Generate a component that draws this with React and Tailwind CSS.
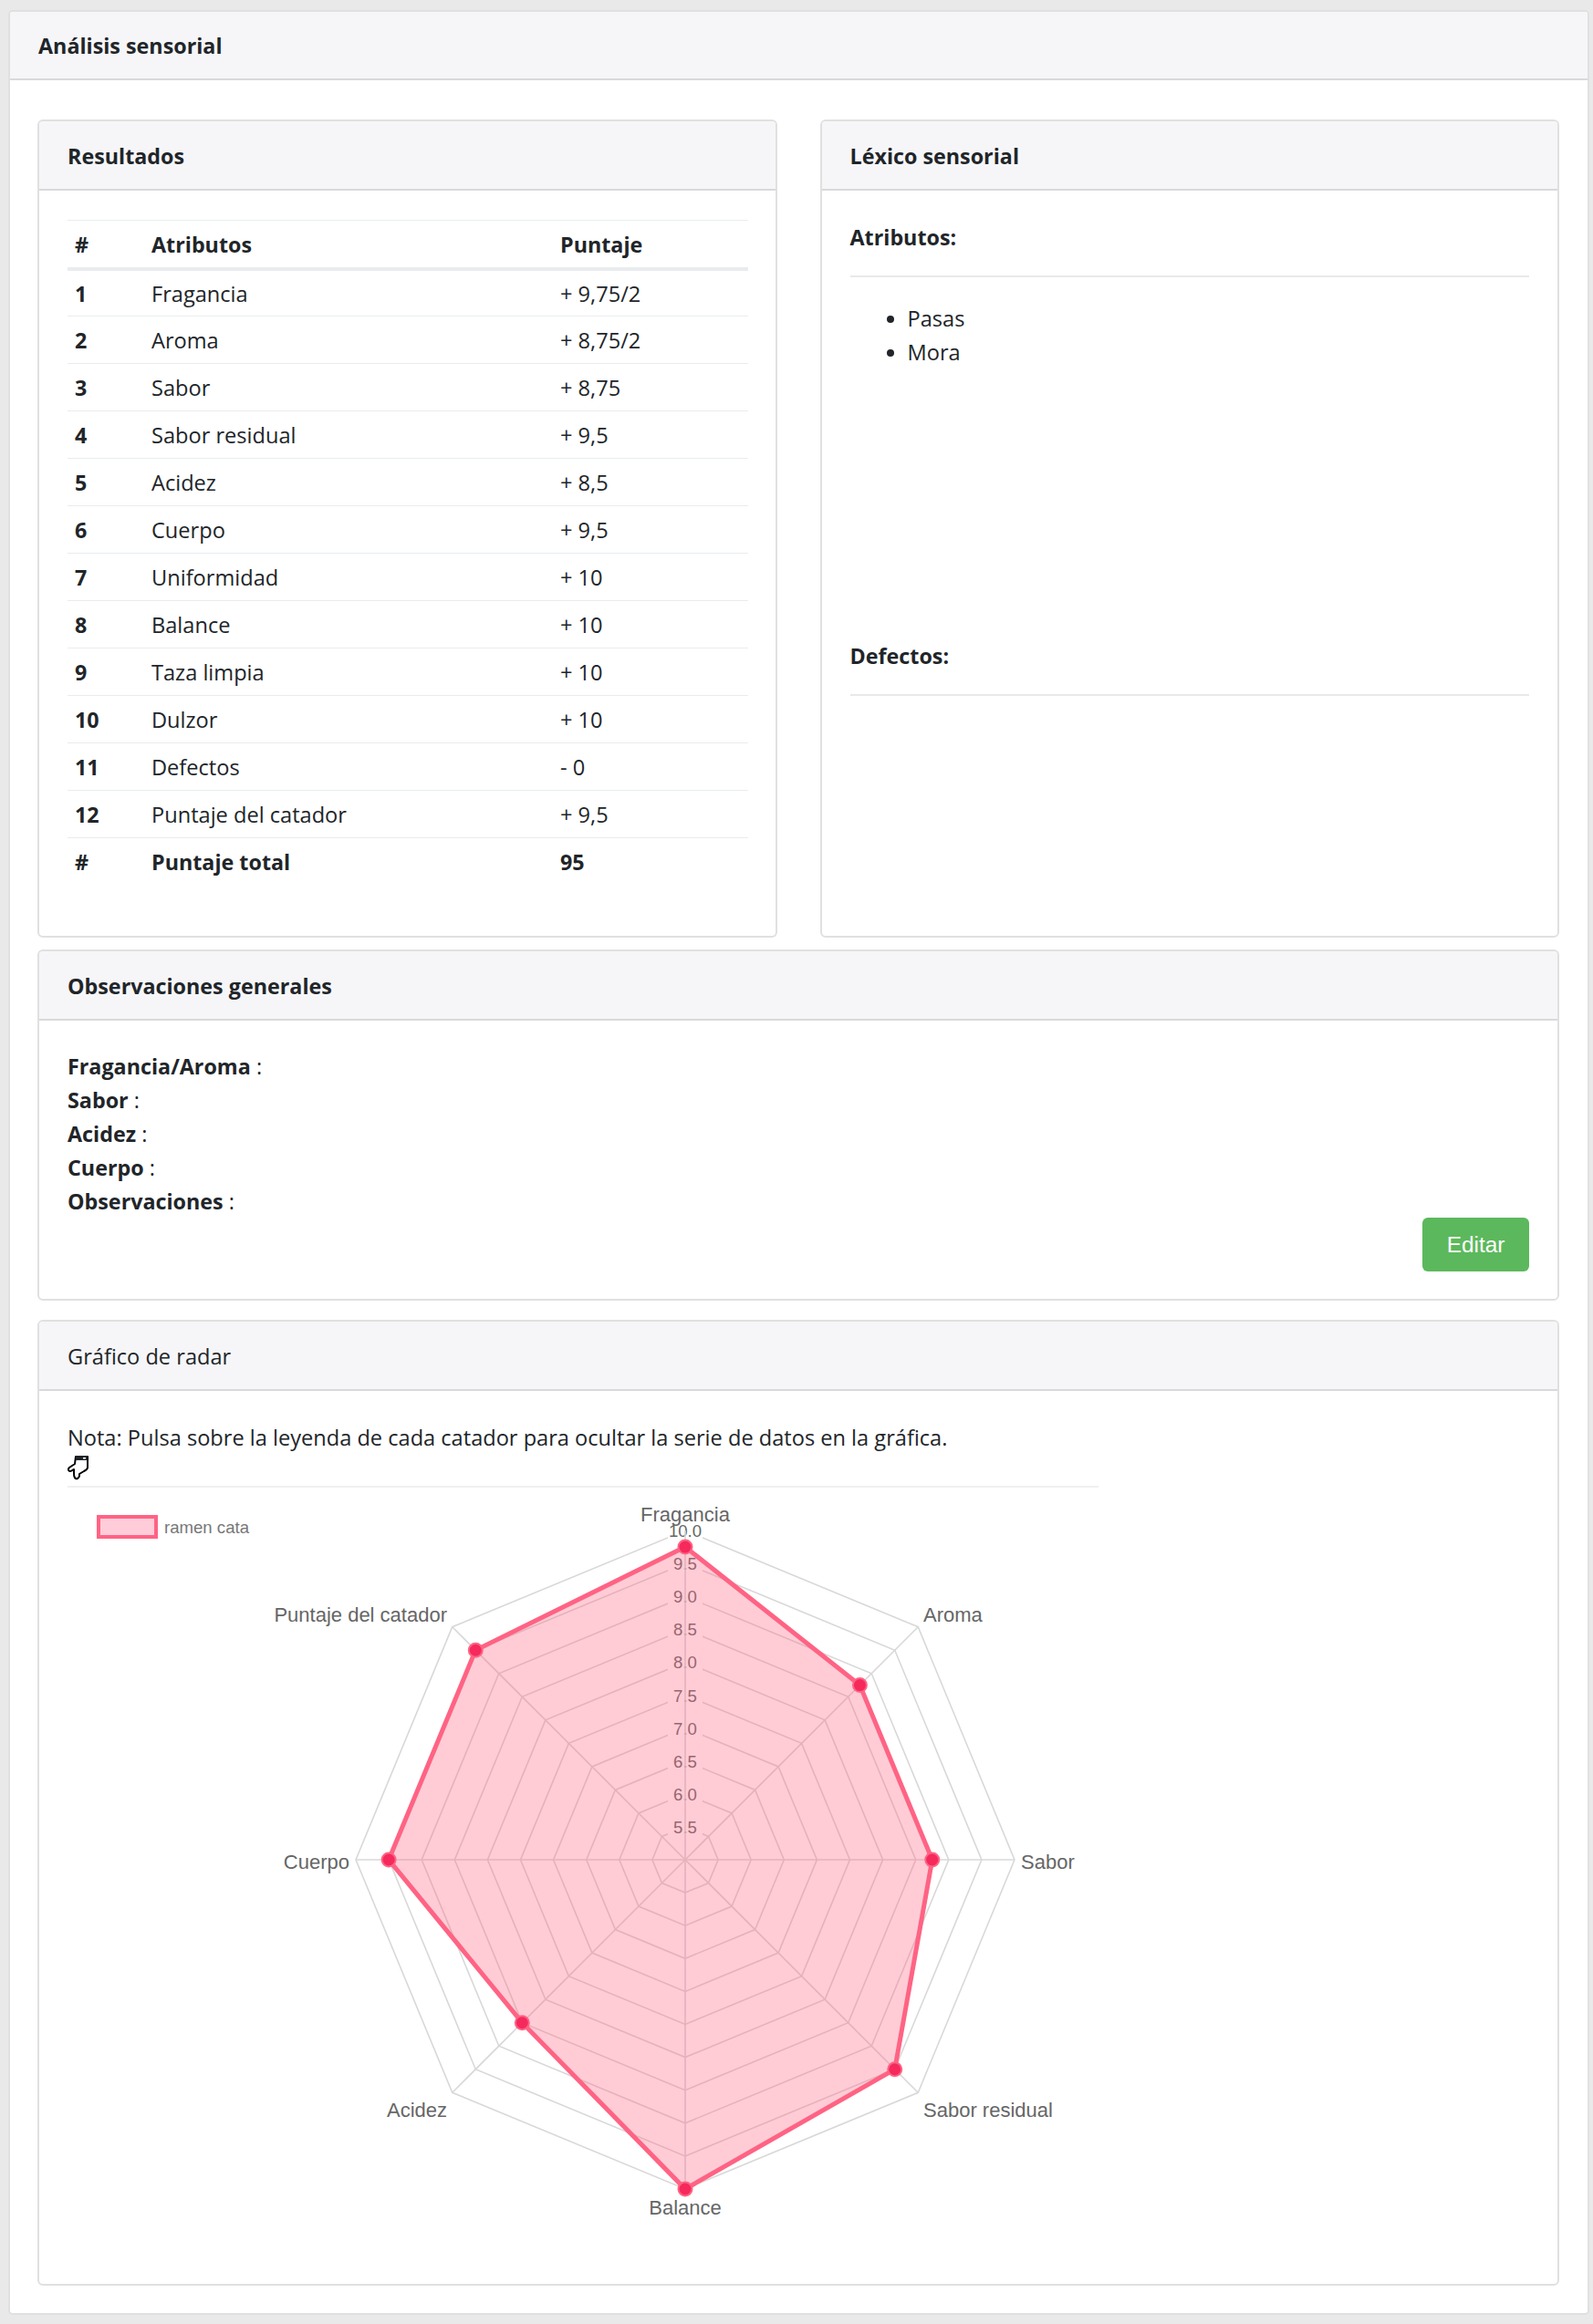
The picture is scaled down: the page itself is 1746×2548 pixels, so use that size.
const rows = [
  ["1", "Fragancia", "+ 9,75/2"], ["2", "Aroma", "+ 8,75/2"], ["3", "Sabor", "+ 8,75"], ["4", "Sabor residual", "+ 9,5"],
  ["5", "Acidez", "+ 8,5"], ["6", "Cuerpo", "+ 9,5"], ["7", "Uniformidad", "+ 10"], ["8", "Balance", "+ 10"],
  ["9", "Taza limpia", "+ 10"], ["10", "Dulzor", "+ 10"], ["11", "Defectos", "- 0"], ["12", "Puntaje del catador", "+ 9,5"],
];
const CX = 677, CY = 408, R = 361;
const axes = [
  ["Fragancia", 9.75], ["Aroma", 8.75], ["Sabor", 8.75], ["Sabor residual", 9.5],
  ["Balance", 10], ["Acidez", 8.5], ["Cuerpo", 9.5], ["Puntaje del catador", 9.5],
];
const pt = (i, r) => {
  const a = (i * Math.PI) / 4 - Math.PI / 2;
  return [CX + r * Math.cos(a), CY + r * Math.sin(a)];
};
const ticks = [5.5, 6, 6.5, 7, 7.5, 8, 8.5, 9, 9.5, 10];
const rad = (v) => ((v - 5) / 5) * R;
function Radar() {
  const poly = axes.map(([, v], i) => pt(i, rad(v)).join(",")).join(" ");
  return (
    <svg width="1130" height="820" viewBox="0 0 1130 820" className="block" style={{ fontFamily: '"Liberation Sans", Arial, sans-serif' }}>
      <rect x="34" y="32" width="63" height="22" fill="#ffccd9" stroke="#ff6384" strokeWidth="4" />
      <text x="106" y="50" fontSize="18.6" fill="#777">ramen cata</text>
      {ticks.map((t) => (
        <polygon key={t} points={axes.map((_, i) => pt(i, rad(t)).join(",")).join(" ")} fill="none" stroke="#d8d8d8" strokeWidth="1.6" />
      ))}
      {ticks.map((t) => (
        <rect key={t} x={CX - 19} y={CY - rad(t) - 13} width="38" height="26" fill="#fff" />
      ))}
      {ticks.map((t) => (
        <text key={t} x={CX} y={CY - rad(t) + 7} textAnchor="middle" fontSize="18.6" fill="#666">{t.toFixed(1)}</text>
      ))}
      {axes.map((_, i) => {
        const [x, y] = pt(i, R);
        return <line key={i} x1={CX} y1={CY} x2={x} y2={y} stroke="#d8d8d8" strokeWidth="1.6" />;
      })}
      <polygon points={poly} fill="#ff6384" fillOpacity="0.33" stroke="none" />
      <polygon points={poly} fill="none" stroke="#ff6384" strokeWidth="5" strokeLinejoin="miter" />
      {axes.map(([, v], i) => {
        const [x, y] = pt(i, rad(v));
        return <circle key={i} cx={x} cy={y} r="7.5" fill="#f5295c" stroke="#ff6384" strokeWidth="2" />;
      })}
      <g fontSize="22" fill="#666">
        <text x={CX} y="37" textAnchor="middle">Fragancia</text>
        <text x={938} y="147" textAnchor="start">Aroma</text>
        <text x={1045} y="418" textAnchor="start">Sabor</text>
        <text x={938} y="690" textAnchor="start">Sabor residual</text>
        <text x={CX} y="797" textAnchor="middle">Balance</text>
        <text x={416} y="690" textAnchor="end">Acidez</text>
        <text x={309} y="418" textAnchor="end">Cuerpo</text>
        <text x={416} y="147" textAnchor="end">Puntaje del catador</text>
      </g>
    </svg>
  );
}
function Hand() {
  return (
    <svg width="24" height="28" viewBox="-1 -1 24 28" className="block">
      <path d="M8 1 H21 V13 C21 15 19 16 17 17 L12 20 V22 C12 24 9 26 8 25 C6 24 6 22 6 15 C5 15 4 17 2 17 C0 17 -1 15 1 13 L7 9 Z" fill="#fff" stroke="#000" strokeWidth="2" strokeLinejoin="round" />
      <rect x="8" y="0" width="13" height="5" fill="#1f2328" />
      <rect x="16" y="2" width="3" height="1.5" fill="#fff" />
    </svg>
  );
}
const cardCls = "border-2 border-[#e0e0e0] rounded-[6px] bg-white overflow-hidden";
const headCls = "h-[76px] flex items-center px-[31px] pt-[2px] bg-[#f6f6f8] border-b-2 border-[#d9d9db]";
const bold = "font-bold text-[23.3px]";
export default function App() {
  return (
    <div className="min-h-[2548px] bg-[#e9e9e9] pt-[11px] pl-[9px] pr-[4px] text-[#212529] text-[23.6px] leading-[37px]" style={{ fontFamily: '"Open Sans", sans-serif' }}>
      <div className="h-[2527px] border-2 border-[#e0e0e0] rounded-[5px] bg-white overflow-hidden">
        <div className={`h-[75px] flex items-center px-[31px] pt-[2px] bg-[#f6f6f8] border-b-2 border-[#d9d9db] ${bold}`}>Análisis sensorial</div>
        <div className="pl-[30px] pr-[31px] pt-[43px]">
          <div className="flex gap-[47px] h-[897px]">
            <div className={`w-[811px] ${cardCls}`}>
              <div className={`${headCls} ${bold}`}>Resultados</div>
              <div className="px-[31px] pt-[32px]">
                <table className="w-[746px] table-fixed border-collapse">
                  <thead>
                    <tr className="h-[53px] border-y border-[#e9ecef] border-b-4">
                      <th className={`w-[92px] pl-[8px] pt-[2px] text-left ${bold}`}>#</th>
                      <th className={`w-[448px] pl-0 pt-[2px] text-left ${bold}`}>Atributos</th>
                      <th className={`pt-[2px] text-left ${bold}`}>Puntaje</th>
                    </tr>
                  </thead>
                  <tbody>
                    {rows.map(([n, a, p]) => (
                      <tr key={n} className="h-[52px] border-b border-[#e9ecef]">
                        <td className={`pl-[8px] pt-[2px] ${bold}`}>{n}</td>
                        <td className="pt-[2px]">{a}</td>
                        <td className="pt-[2px]">{p}</td>
                      </tr>
                    ))}
                    <tr className={`h-[52px] ${bold}`}>
                      <td className="pl-[8px] pt-[2px]">#</td>
                      <td className="pt-[2px]">Puntaje total</td>
                      <td className="pt-[2px]">95</td>
                    </tr>
                  </tbody>
                </table>
              </div>
            </div>
            <div className={`w-[811px] ${cardCls}`}>
              <div className={`${headCls} ${bold}`}>Léxico sensorial</div>
              <div className="px-[31px]">
                <div className={`pt-[33px] pb-[23px] border-b-2 border-[#e9e9e9] ${bold}`}>Atributos:</div>
                <ul className="list-disc pl-[63px] pt-[27px] h-[381px]">
                  <li>Pasas</li>
                  <li>Mora</li>
                </ul>
                <div className={`pt-[16px] pb-[23px] border-b-2 border-[#e9e9e9] ${bold}`}>Defectos:</div>
              </div>
            </div>
          </div>
          <div className={`mt-[13px] h-[385px] ${cardCls}`}>
            <div className={`${headCls} ${bold}`}>Observaciones generales</div>
            <div className="px-[31px] pt-[32px]">
              <div><b className={bold}>Fragancia/Aroma</b> :</div>
              <div><b className={bold}>Sabor</b> :</div>
              <div><b className={bold}>Acidez</b> :</div>
              <div><b className={bold}>Cuerpo</b> :</div>
              <div><b className={bold}>Observaciones</b> :</div>
              <div className="flex justify-end mt-[-1px]">
                <button className="w-[117px] h-[59px] rounded-[6px] bg-[#5cb85c] text-white text-[24.4px]" style={{ fontFamily: '"Liberation Sans", sans-serif' }}>Editar</button>
              </div>
            </div>
          </div>
          <div className={`mt-[21px] h-[1059px] ${cardCls}`}>
            <div className={headCls}>Gráfico de radar</div>
            <div className="px-[31px] pt-[33px]">
              <div>Nota: Pulsa sobre la leyenda de cada catador para ocultar la serie de datos en la gráfica.</div>
              <div className="w-[1130px] h-[36px] border-b-2 border-[#f0f0f0]"><Hand /></div>
              <Radar />
            </div>
          </div>
        </div>
      </div>
    </div>
  );
}
